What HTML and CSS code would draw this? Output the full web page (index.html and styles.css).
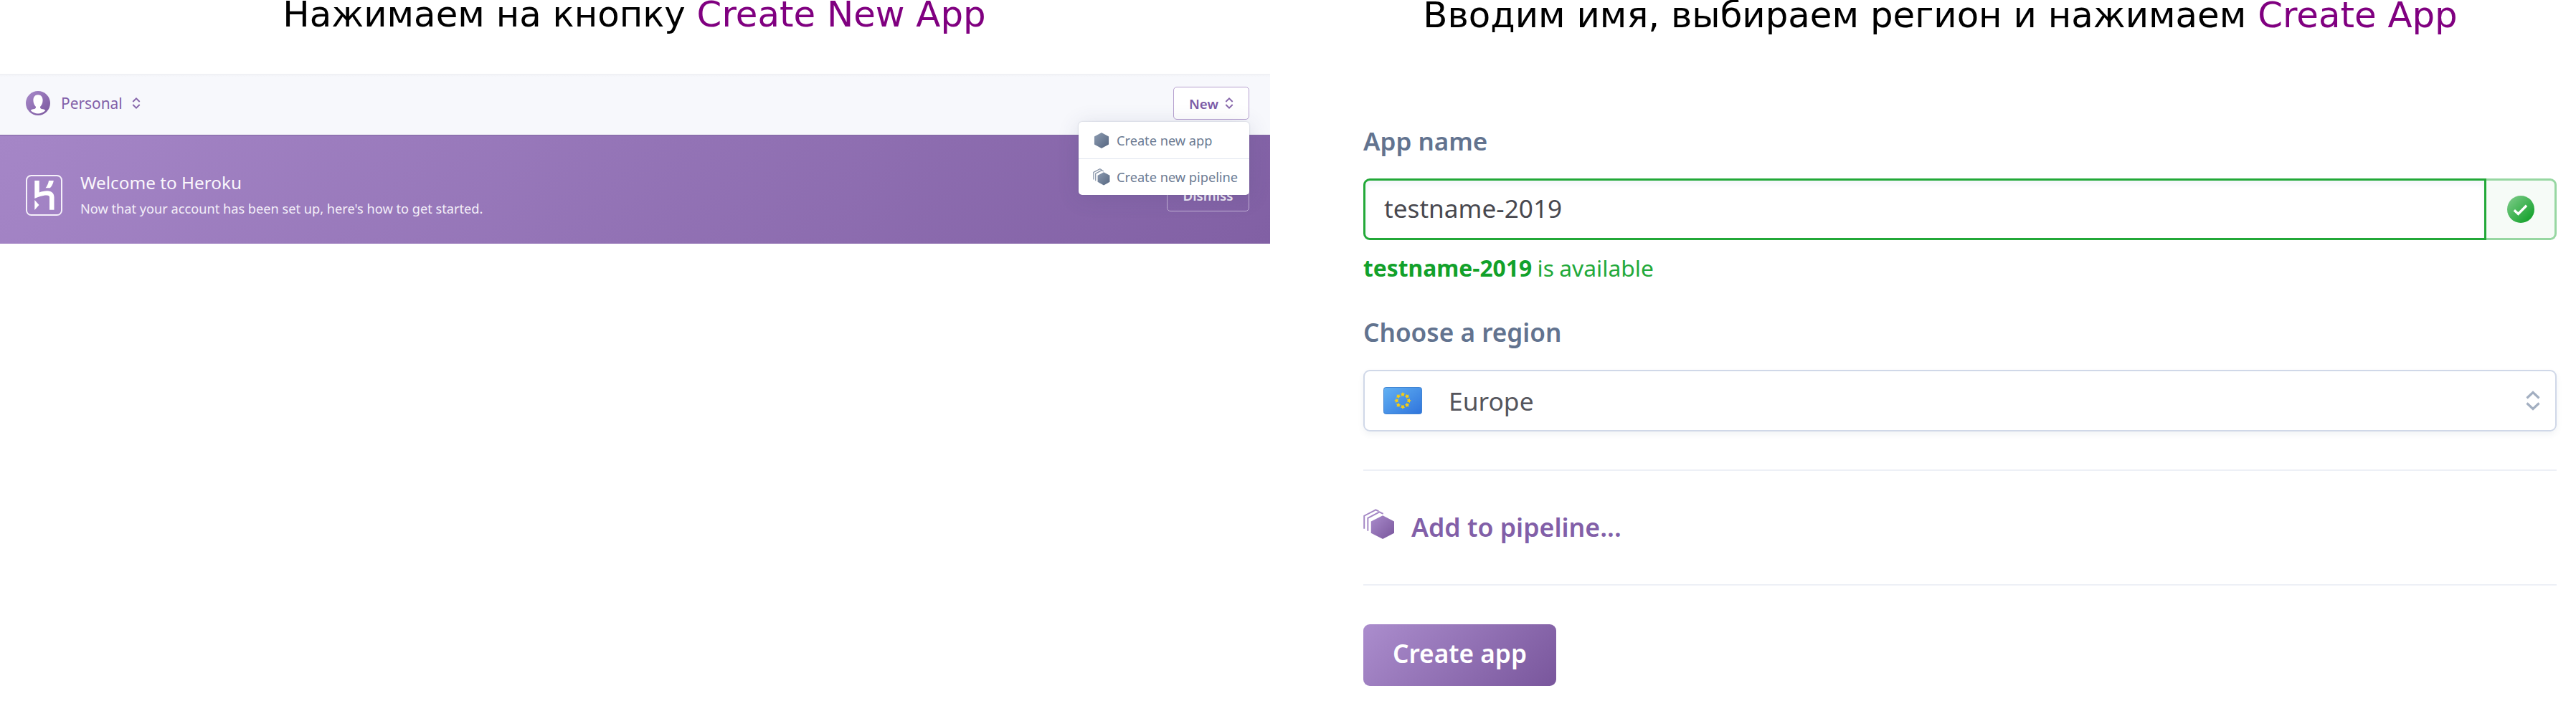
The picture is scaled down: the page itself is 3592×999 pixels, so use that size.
FILE: index.html
```
<!DOCTYPE html>
<html lang="ru">
<head>
<meta charset="utf-8">
<title>Heroku</title>
<link rel="stylesheet" href="styles.css">
</head>
<body>
<svg class="defs" width="0" height="0" aria-hidden="true">
  <defs>
    <linearGradient id="purple" x1="0" y1="0" x2="1" y2="1"><stop offset="0" stop-color="#a98bcb"/><stop offset="1" stop-color="#79569c"/></linearGradient>
    <linearGradient id="slate" x1="0" y1="0" x2="1" y2="1"><stop offset="0" stop-color="#8b9ab0"/><stop offset="1" stop-color="#576781"/></linearGradient>
    <linearGradient id="green" x1="0" y1="0" x2="1" y2="1"><stop offset="0.05" stop-color="#7ccb88"/><stop offset="0.9" stop-color="#12a12a"/></linearGradient>
    <linearGradient id="blue" x1="0" y1="0" x2="1" y2="1"><stop offset="0" stop-color="#62b1f3"/><stop offset="1" stop-color="#2f74dc"/></linearGradient>
  </defs>
</svg>
<main class="slides">
  <section class="slide">
    <h2 class="title">Нажимаем на кнопку <span class="accent">Create New App</span></h2>
    <div class="dashboard">
      <header class="topbar">
        <div class="account">
          <svg class="avatar" viewBox="0 0 34 34"><circle cx="17" cy="17" r="17" fill="url(#purple)"/><path d="M17 5.300C12.600 5.300 10.400 8.600 10.400 13C10.400 17 12 20 14 22C14.300 24 13 25 10.500 25.300C8.500 25.600 7.200 26 6.800 27.300C9.500 30 13 31.500 17 31.500C21 31.500 24.500 30 27.200 27.300C26.800 26 25.500 25.600 23.500 25.300C21 25 19.700 24 20 22C22 20 23.600 17 23.600 13C23.600 8.600 21.400 5.300 17 5.300Z" fill="#fff"/></svg>
          <span class="account-name">Personal</span>
          <svg class="caret" viewBox="0 0 12 16"><path d="M1.300 6L6 1.400L10.700 6M1.300 10L6 14.600L10.700 10"/></svg>
        </div>
        <div class="new-menu">
          <button class="btn-new">New <svg class="caret" viewBox="0 0 12 16"><path d="M1.300 6L6 1.400L10.700 6M1.300 10L6 14.600L10.700 10"/></svg></button>
          <div class="dropdown">
            <div class="item">
              <svg class="item-icon" viewBox="0 0 24 24"><path d="M12 1.800L21.300 7V17L12 22.200L2.700 17V7Z" fill="url(#slate)" stroke="url(#slate)" stroke-width="1.500" stroke-linejoin="round"/></svg>
              <span>Create new app</span>
            </div>
            <div class="item">
              <svg class="item-icon" viewBox="0 0 42 42"><path d="M26.500 9L41 17V33L26.500 41L11.500 33V17Z" fill="url(#slate)"/><path d="M1.500 27V9.500L17 1.300L21.500 3.500M6.500 30V12.500L21.500 4.500L26 7" fill="none" stroke="#8794a8" stroke-width="2.200"/></svg>
              <span>Create new pipeline</span>
            </div>
          </div>
        </div>
      </header>
      <div class="banner">
        <svg class="logo" viewBox="0 0 51 57"><rect x="1" y="1" width="49" height="55" rx="6.500" fill="none" stroke="#f5f0fa" stroke-width="2"/><path d="M12.300 8H18.800V24.500C22 23.300 26 22.300 30 22.300C36 22.300 39.500 26 39.500 31V48.700H33V31.500C33 29.500 32 28.400 29 28.400C23 28.400 16.500 31 12.300 33ZM12.300 35L18.500 42L12.300 49ZM32 8H38.800C38.200 12 36.500 15.500 33.800 18.300H27.500C30 15.300 31.500 11.500 32 8Z" fill="#fff"/></svg>
        <div class="banner-text">
          <div class="banner-title">Welcome to Heroku</div>
          <div class="banner-sub">Now that your account has been set up, here's how to get started.</div>
        </div>
        <button class="btn-dismiss">Dismiss</button>
      </div>
    </div>
  </section>
  <section class="slide">
    <h2 class="title title-lower">Вводим имя, выбираем регион и нажимаем <span class="accent">Create App</span></h2>
    <form class="form">
      <label class="label">App name</label>
      <div class="name-field">
        <div class="name-input">testname-2019</div>
        <div class="name-status">
          <svg class="check" viewBox="0 0 38 38"><circle cx="19" cy="19" r="19" fill="url(#green)"/><path d="M9.800 20.200L15.500 25.500L27 13.800" fill="none" stroke="#fff" stroke-width="3.400"/></svg>
        </div>
      </div>
      <div class="help"><b>testname-2019</b> is available</div>
      <label class="label label-region">Choose a region</label>
      <div class="select">
        <svg class="flag" viewBox="0 0 54 38"><rect x="0.500" y="0.500" width="53" height="37" rx="3" fill="url(#blue)" stroke="#3f83d2"/><g fill="#f5cd13"><path id="star" d="M27 7L28.100 8.900L30.200 9.300L28.700 10.900L29 13L27 12.200L25 13L25.300 10.900L23.800 9.300L25.900 8.900Z"/><use href="#star" transform="rotate(45 27 19)"/><use href="#star" transform="rotate(90 27 19)"/><use href="#star" transform="rotate(135 27 19)"/><use href="#star" transform="rotate(180 27 19)"/><use href="#star" transform="rotate(225 27 19)"/><use href="#star" transform="rotate(270 27 19)"/><use href="#star" transform="rotate(315 27 19)"/></g></svg>
        <span class="region">Europe</span>
        <svg class="select-caret" viewBox="0 0 20 28"><path d="M1.500 10.500L10 2.500L18.500 10.500M1.500 17.500L10 25.500L18.500 17.500"/></svg>
      </div>
      <hr class="rule">
      <div class="pipeline">
        <svg class="pipeline-icon" viewBox="0 0 42 42"><path d="M26.500 9L42 17V33L26.500 41L10.500 33V17Z" fill="url(#purple)"/><path d="M1.200 27V9.500L17 1.300L21 3.200M6.200 30V12.500L22 4.300L27 6.800" fill="none" stroke="#a386c4" stroke-width="1.900"/></svg>
        <span>Add to pipeline...</span>
      </div>
      <hr class="rule">
      <button class="btn-create" type="button">Create app</button>
    </form>
  </section>
</main>
</body>
</html>
```
FILE: styles.css
```
* { box-sizing: border-box; }

body {
  margin: 0;
  height: 999px;
  overflow: hidden;
  background: #fff;
  font-family: "Noto Sans", "Open Sans", sans-serif;
}

.defs { position: absolute; }
button { font-family: inherit; margin: 0; }
svg { display: block; flex: none; }

.slides {
  display: grid;
  grid-template-columns: 1771px 1771px;
  column-gap: 49px;
}

/* Slide headings */
.title {
  margin: 0;
  height: 41px;
  font: 400 49.8px/40px "DejaVu Sans", sans-serif;
  text-align: center;
  white-space: nowrap;
  color: #000;
}
.title:not(.title-lower) { padding-right: 2px; }
.title-lower { padding-top: 1px; }
.accent { color: #800080; }

/* Dashboard */
.dashboard { margin-top: 62px; }

.topbar {
  display: flex;
  justify-content: space-between;
  align-items: center;
  height: 85px;
  padding: 0 29px 3px 36px;
  background: linear-gradient(#eeeff3, #f7f8fc 4px);
}
.account { display: flex; align-items: center; color: #8260a8; }
.avatar { width: 34px; height: 34px; margin-right: 15px; }
.account-name { font-size: 20.9px; line-height: 30px; margin-right: 13px; }
.caret {
  width: 12px;
  height: 16px;
  fill: none;
  stroke: #8665aa;
  stroke-width: 1.9;
}

.new-menu { position: relative; }
.btn-new {
  display: flex;
  align-items: center;
  gap: 9px;
  width: 106px;
  height: 46px;
  padding: 0 0 0 21px;
  border: 1.5px solid #b6a0cf;
  border-radius: 5px;
  background: #fff;
  color: #7d5ba6;
  font-size: 18.7px;
  font-weight: 600;
}
.dropdown {
  position: absolute;
  z-index: 2;
  top: 49px;
  right: 0;
  width: 238px;
  border-radius: 5px;
  background: #fff;
  box-shadow: 0 0 2px rgba(60, 70, 110, .3), 0 4px 30px rgba(60, 70, 110, .16);
}
.item {
  display: flex;
  align-items: center;
  gap: 9px;
  height: 51px;
  padding-left: 20px;
  font-size: 18.2px;
  white-space: nowrap;
  color: #6b7b93;
}
.item + .item { border-top: 1.5px solid #e2e6ef; }
.item-icon { width: 24px; height: 24px; }

.banner {
  display: flex;
  align-items: center;
  height: 152px;
  padding: 15px 29px 0 36px;
  border-top: 1px solid #8067a2;
  background: linear-gradient(135deg, #a586c7, #8160a4);
  color: #fff;
}
.logo { width: 51px; height: 57px; margin-right: 25px; }
.banner-title { font-size: 24.3px; line-height: 37px; color: #faf7fc; }
.banner-sub { font-size: 18.2px; line-height: 36px; color: #f3eef8; }
.btn-dismiss {
  width: 115px;
  height: 46px;
  margin-left: auto;
  border: 1.5px solid #c3b1d6;
  border-radius: 5px;
  background: none;
  color: #f3eef8;
  font-size: 18.7px;
  font-weight: 600;
}

/* New app form */
.form {
  display: flex;
  flex-direction: column;
  padding: 132px 26px 0 81px;
}
.label {
  font-size: 35px;
  font-weight: 600;
  line-height: 48px;
  color: #62738f;
}
.label-region { margin-top: 43px; font-size: 35.2px; }

.name-field { display: flex; height: 86px; margin-top: 28px; }
.name-input {
  width: 1566px;
  padding: 0 26px;
  border: 3px solid #22a838;
  border-radius: 9px 0 0 9px;
  box-shadow: inset 0 5px 8px #f3f5fa;
  font-size: 35.2px;
  line-height: 76px;
  color: #48484f;
}
.name-status {
  flex: 1;
  display: flex;
  align-items: center;
  justify-content: center;
  border: 3px solid #97d7a2;
  border-left: 0;
  border-radius: 0 9px 9px 0;
  background: #f6fbf7;
}
.check { width: 38px; height: 38px; }

.help {
  margin-top: 17px;
  font-size: 31.8px;
  line-height: 44px;
  word-spacing: -1px;
  color: #22a93a;
}
.help b { font-weight: 700; color: #12a12a; }

.select {
  display: flex;
  align-items: center;
  height: 86px;
  margin-top: 29px;
  padding: 0 21px 0 26px;
  border: 2.5px solid #d0d8e8;
  border-radius: 9px;
  box-shadow: 0 4px 9px rgba(60, 80, 120, .07);
}
.flag { width: 54px; height: 38px; margin-right: 37px; }
.region { font-size: 35.4px; line-height: 48px; color: #55555c; }
.select-caret {
  width: 20px;
  height: 28px;
  margin-left: auto;
  fill: none;
  stroke: #a3afc1;
  stroke-width: 3.2;
}

.rule {
  width: 100%;
  height: 2px;
  margin: 53px 0 0;
  border: 0;
  background: #edf0f6;
}
.pipeline {
  display: flex;
  align-items: center;
  gap: 24px;
  height: 158px;
  padding-bottom: 2px;
  font-size: 35.7px;
  font-weight: 600;
  color: #825fa8;
}
.pipeline-icon { width: 43px; height: 43px; margin-bottom: 7px; }
.pipeline + .rule { margin-top: 0; }

.btn-create {
  width: 269px;
  height: 86px;
  margin-top: 54px;
  padding: 0 0 6px;
  border: 0;
  border-radius: 9px;
  background: linear-gradient(135deg, #ab8dcd, #79569c);
  color: #fff;
  font-size: 35.2px;
  font-weight: 600;
}
```
